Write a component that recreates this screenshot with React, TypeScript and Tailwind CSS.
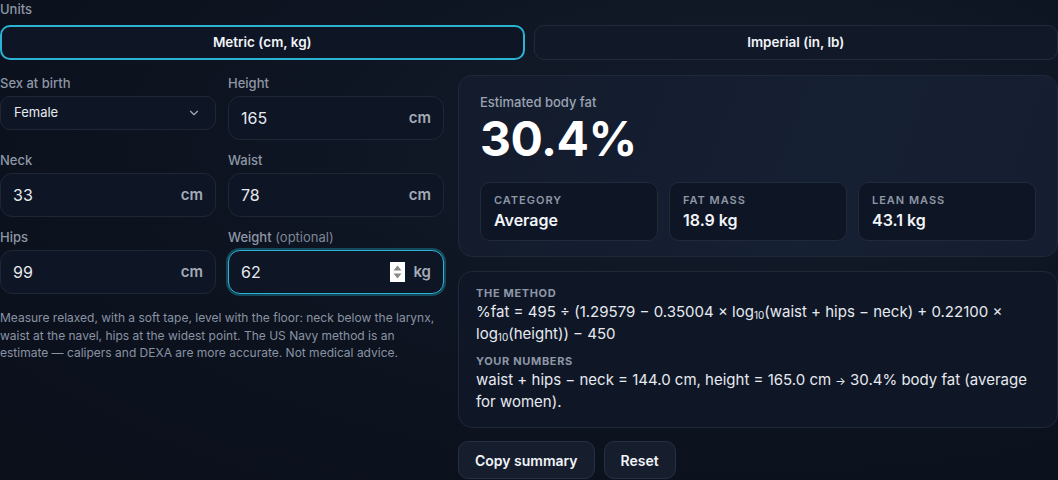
import React from "react";
import { ChevronDown } from "lucide-react";

const font = { fontFamily: "Inter, 'Noto Sans', sans-serif" };

const Field = ({
  label,
  hint,
  value,
  unit,
  focused,
}: {
  label: string;
  hint?: string;
  value: string;
  unit: string;
  focused?: boolean;
}) => (
  <div className="flex flex-col gap-[5px]">
    <div className="text-[13px] font-medium text-[#8e97a6] leading-[16px]">
      {label}
      {hint && <span className="font-normal text-[#7d8696]"> {hint}</span>}
    </div>
    <div
      className={
        focused
          ? "flex items-center h-[44px] rounded-[12px] border border-[#2ab3d3] bg-[#0e1524] pl-[12px] pr-[12px] shadow-[0_0_0_2px_rgba(34,170,205,0.35)]"
          : "flex items-center h-[44px] rounded-[12px] border border-[#1f2737] bg-[#0e1524] pl-[12px] pr-[12px]"
      }
    >
      <span className="flex-1 text-[16px] text-[#e6eaf0]">{value}</span>
      {focused && (
        <div className="mr-[8px] flex h-[20px] w-[15px] flex-col items-center justify-center gap-[2px] bg-white">
          <svg width="9" height="6" viewBox="0 0 9 6">
            <path d="M4.5 0.5 L8.5 5.5 L0.5 5.5 Z" fill="#8a8a8a" />
          </svg>
          <svg width="9" height="6" viewBox="0 0 9 6">
            <path d="M0.5 0.5 L8.5 0.5 L4.5 5.5 Z" fill="#8a8a8a" />
          </svg>
        </div>
      )}
      <span className="text-[15px] font-semibold text-[#a3abb8]">{unit}</span>
    </div>
  </div>
);

const Stat = ({ label, value }: { label: string; value: string }) => (
  <div className="flex flex-col gap-[3px] rounded-[10px] border border-[#212a3b] bg-[#0e1525] px-[13px] py-[10px]">
    <div className="text-[11px] font-semibold leading-[14px] tracking-[0.09em] text-[#8e97a6]">
      {label}
    </div>
    <div className="text-[16px] font-semibold leading-[20px] text-[#f1f4f8]">{value}</div>
  </div>
);

const Log = () => (
  <>
    log<span className="text-[10px] leading-none align-[-2px]">10</span>
  </>
);

export default function App() {
  return (
    <div
      style={font}
      className="min-h-screen w-[1058px] overflow-hidden bg-[radial-gradient(ellipse_at_70%_30%,#141c2c_0%,#0c121e_60%,#0b101b_100%)] text-[#e6eaf0]"
    >
      <div className="flex flex-col">
        <div className="pt-[1px] text-[13px] font-medium leading-[16px] text-[#8e97a6]">
          Units
        </div>
        <div className="mt-[8px] grid grid-cols-2 gap-[9px]">
          <button className="h-[35px] rounded-[10px] border-2 border-[#2ab3d3] bg-[#0e1525] text-[13.5px] font-semibold text-[#f1f4f8]">
            Metric (cm, kg)
          </button>
          <button className="h-[35px] rounded-[10px] border border-[#222b3c] bg-[#111929] text-[13.5px] font-semibold text-[#f1f4f8]">
            Imperial (in, lb)
          </button>
        </div>

        <div className="mt-[15px] flex gap-[14px]">
          <div className="flex w-[444px] flex-col">
            <div className="grid grid-cols-2 gap-x-[12px] gap-y-[12px]">
              <div className="flex flex-col gap-[5px]">
                <div className="text-[13px] font-medium leading-[16px] text-[#8e97a6]">
                  Sex at birth
                </div>
                <div className="flex h-[34px] items-center justify-between rounded-[10px] border border-[#1f2737] bg-[#0e1524] pl-[13px] pr-[14px]">
                  <span className="text-[13px] text-[#e6eaf0]">Female</span>
                  <ChevronDown size={14} strokeWidth={2} className="text-[#a3abb8]" />
                </div>
              </div>
              <Field label="Height" value="165" unit="cm" />
              <Field label="Neck" value="33" unit="cm" />
              <Field label="Waist" value="78" unit="cm" />
              <Field label="Hips" value="99" unit="cm" />
              <Field label="Weight" hint="(optional)" value="62" unit="kg" focused />
            </div>
            <p className="mt-[15px] text-[12px] leading-[17.5px] text-[#8a93a3]">
              Measure relaxed, with a soft tape, level with the floor: neck below the larynx,
              waist at the navel, hips at the widest point. The US Navy method is an
              estimate — calipers and DEXA are more accurate. Not medical advice.
            </p>
          </div>

          <div className="flex flex-1 flex-col">
            <div className="rounded-[14px] border border-[#1f2839] bg-[linear-gradient(110deg,#131b2c_0%,#162033_60%,#151e30_100%)] px-[21px] pb-[15px] pt-[18px]">
              <div className="text-[13px] font-medium leading-[16px] text-[#9aa3b1]">
                Estimated body fat
              </div>
              <div className="text-[48px] font-bold leading-[58px] tracking-[-0.01em] text-white">
                30.4%
              </div>
              <div className="mt-[14px] grid grid-cols-3 gap-[11px]">
                <Stat label="CATEGORY" value="Average" />
                <Stat label="FAT MASS" value="18.9 kg" />
                <Stat label="LEAN MASS" value="43.1 kg" />
              </div>
            </div>

            <div className="mt-[14px] rounded-[14px] border border-[#1f2839] bg-[#0f1626] px-[17px] pb-[14px] pt-[14px]">
              <div className="text-[11px] font-bold leading-[14px] tracking-[0.06em] text-[#8e97a6]">
                THE METHOD
              </div>
              <div className="mt-[1px] text-[15px] leading-[22px] text-[#e6eaf0]">
                %fat = 495 ÷ (1.29579 − 0.35004 × <Log />(waist + hips − neck) + 0.22100 ×{" "}
                <Log />(height)) − 450
              </div>
              <div className="mt-[9px] text-[11px] font-bold leading-[14px] tracking-[0.06em] text-[#8e97a6]">
                YOUR NUMBERS
              </div>
              <div className="mt-[1px] text-[15px] leading-[22px] text-[#e6eaf0]">
                waist + hips − neck = 144.0 cm, height = 165.0 cm{" "}
                <span className="text-[11px] leading-none">→</span> 30.4% body fat (average for
                women).
              </div>
            </div>

            <div className="mt-[13px] flex gap-[9px]">
              <button className="h-[38px] rounded-[10px] border border-[#263043] bg-[#161e2e] px-[16px] text-[14px] font-semibold text-[#f1f4f8]">
                Copy summary
              </button>
              <button className="h-[38px] rounded-[10px] border border-[#263043] bg-[#161e2e] px-[16px] text-[14px] font-semibold text-[#f1f4f8]">
                Reset
              </button>
            </div>
          </div>
        </div>
      </div>
    </div>
  );
}
